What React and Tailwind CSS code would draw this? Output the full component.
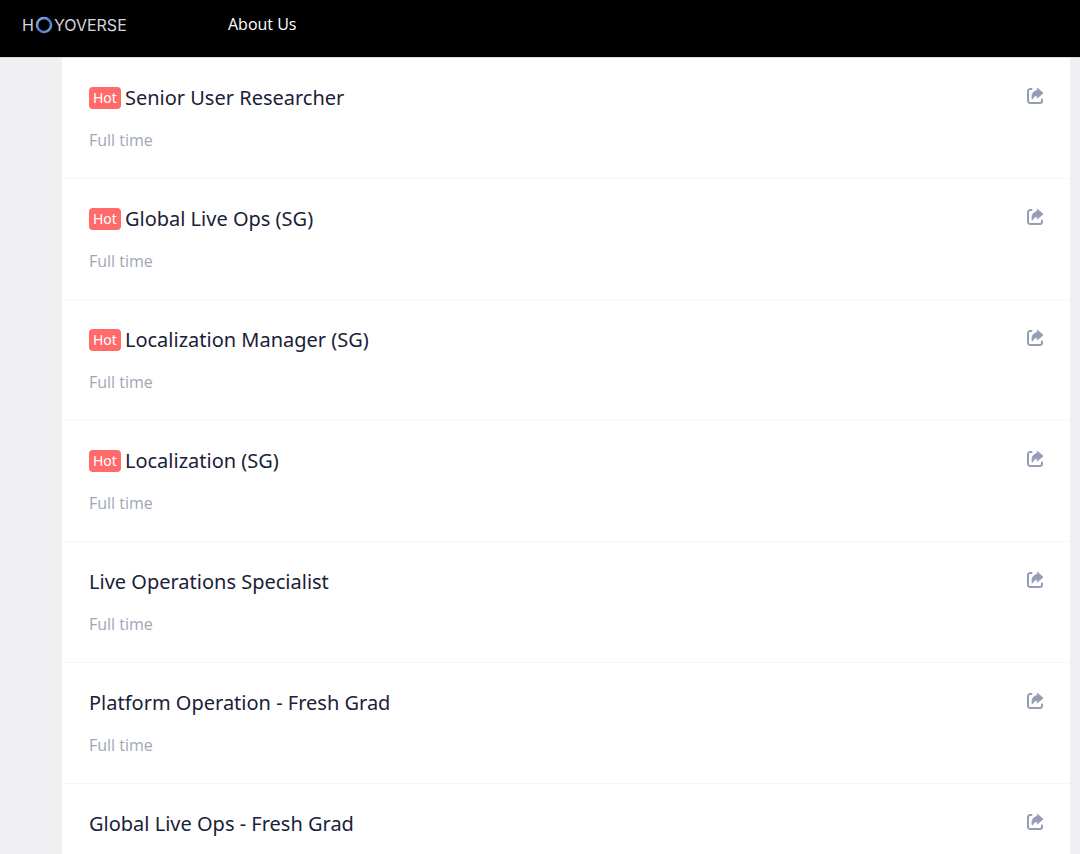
import React from 'react';

const jobs = [
  { title: 'Senior User Researcher', type: 'Full time', hot: true },
  { title: 'Global Live Ops (SG)', type: 'Full time', hot: true },
  { title: 'Localization Manager (SG)', type: 'Full time', hot: true },
  { title: 'Localization (SG)', type: 'Full time', hot: true },
  { title: 'Live Operations Specialist', type: 'Full time', hot: false },
  { title: 'Platform Operation - Fresh Grad', type: 'Full time', hot: false },
  { title: 'Global Live Ops - Fresh Grad', hot: false },
];

const ShareIcon = () => (
  <svg viewBox="0 0 18 18" className="w-[18px] h-[18px]" fill="none" aria-hidden="true">
    <path d="M5.5 2H4.2A2.2 2.2 0 0 0 2 4.2v9.6A2.2 2.2 0 0 0 4.2 16h9.6a2.2 2.2 0 0 0 2.2-2.2V12.6" stroke="currentColor" strokeWidth="2" strokeLinecap="round" />
    <path d="M11.4 1.2 17 6.1l-5.6 4.9V8.6C9 8.6 7.6 9.6 6.3 12.2 5.2 7.2 7.4 3.8 11.4 3.6z" fill="currentColor" stroke="currentColor" strokeWidth="0.9" strokeLinejoin="round" />
  </svg>
);

const Logo = () => (
  <a href="/" aria-label="HoYoverse" className="flex items-center gap-px font-['Inter',sans-serif] text-base leading-5 text-[#d6d4de]">
    <span>H</span>
    <svg viewBox="0 0 18 18" className="w-[18px] h-[18px]" fill="none">
      <defs>
        <linearGradient id="ring" x1="0" y1="0" x2="1" y2="1">
          <stop offset="0" stopColor="#7fb4f5" />
          <stop offset="0.55" stopColor="#4a7cc4" />
          <stop offset="1" stopColor="#7d9fd8" />
        </linearGradient>
      </defs>
      <circle cx="9" cy="9" r="7" stroke="url(#ring)" strokeWidth="2.6" />
    </svg>
    <span>YOVERSE</span>
  </a>
);

const JobRow = ({ job }) => (
  <li className="flex items-start justify-between border-b border-[#f7f7f9] pl-[27px] pr-[26px] pt-6 pb-[26px]">
    <div>
      <h2 className="flex items-center gap-1 font-['Noto_Sans',sans-serif] text-xl leading-8 text-[#1a2138]">
        {job.hot && <span className="rounded bg-[#ff6a6a] px-1 text-sm leading-[22px] text-white">Hot</span>}
        <a href="#job">{job.title}</a>
      </h2>
      {job.type && <p className="mt-[14px] text-base leading-6 text-[#9ea7b8]">{job.type}</p>}
    </div>
    <button type="button" aria-label={`Share ${job.title}`} className="mt-[5px] cursor-pointer text-[#949db5]">
      <ShareIcon />
    </button>
  </li>
);

const App = () => {
  return (
    <div className="min-h-screen bg-[#f0f0f3] font-['Open_Sans','Noto_Sans',sans-serif]">
      <header className="flex items-center border-b border-[#d8d8dc] bg-black pb-2 pl-[22px] h-[58px]">
        <div className="w-[206px]">
          <Logo />
        </div>
        <nav className="pb-0.5">
          <a href="/about" className="text-base leading-6 font-medium text-white">About Us</a>
        </nav>
      </header>

      <main className="ml-[62px] mr-[10px] bg-white">
        <ul>
          {jobs.map((job) => (
            <JobRow key={job.title} job={job} />
          ))}
        </ul>
      </main>
    </div>
  );
};

export default App;
